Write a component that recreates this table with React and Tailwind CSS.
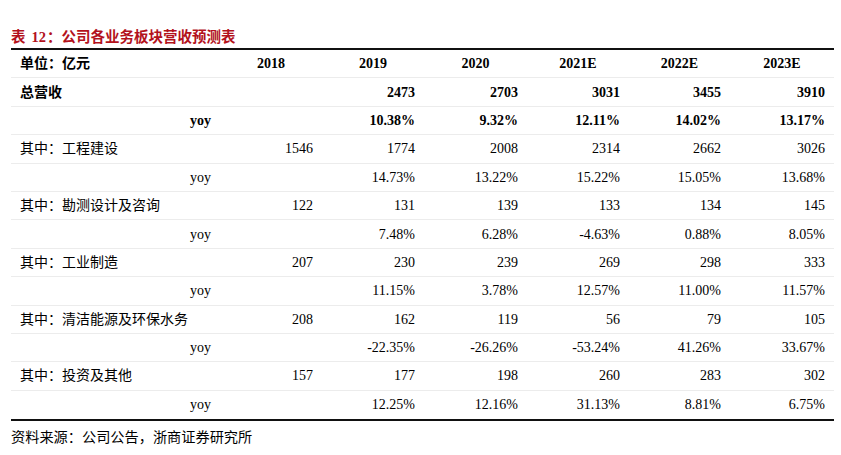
import React from "react";

const rows = [
  { label: "总营收", v: ["", "2473", "2703", "3031", "3455", "3910"], bold: true },
  { yoy: true, v: ["", "10.38%", "9.32%", "12.11%", "14.02%", "13.17%"], bold: true },
  { label: "其中：工程建设", v: ["1546", "1774", "2008", "2314", "2662", "3026"] },
  { yoy: true, v: ["", "14.73%", "13.22%", "15.22%", "15.05%", "13.68%"] },
  { label: "其中：勘测设计及咨询", v: ["122", "131", "139", "133", "134", "145"] },
  { yoy: true, v: ["", "7.48%", "6.28%", "-4.63%", "0.88%", "8.05%"] },
  { label: "其中：工业制造", v: ["207", "230", "239", "269", "298", "333"] },
  { yoy: true, v: ["", "11.15%", "3.78%", "12.57%", "11.00%", "11.57%"] },
  { label: "其中：清洁能源及环保水务", v: ["208", "162", "119", "56", "79", "105"] },
  { yoy: true, v: ["", "-22.35%", "-26.26%", "-53.24%", "41.26%", "33.67%"] },
  { label: "其中：投资及其他", v: ["157", "177", "198", "260", "283", "302"] },
  { yoy: true, v: ["", "12.25%", "12.16%", "31.13%", "8.81%", "6.75%"] },
];

const years = ["2018", "2019", "2020", "2021E", "2022E", "2023E"];

const grid = "grid grid-cols-[209px_102px_102px_103px_102px_101px_104px] items-center";

export default function App() {
  return (
    <div
      className="w-[841px] h-[455px] bg-white text-black pl-[11px]"
      style={{ fontFamily: '"Liberation Serif", "Noto Sans CJK SC", serif' }}
    >
      <div className="pt-[26px] h-[48px] text-[14.5px] leading-[20px] font-bold text-[#b3121c] flex items-center">
        <span>表</span>
        <span className="ml-[6px]">12</span>
        <span className="ml-[1px]">：</span>
        <span>公司各业务板块营收预测表</span>
      </div>
      <div className="w-[823px] border-t-2 border-b-2 border-[#111]">
        <div className={`${grid} h-[28.4px] border-b border-[#ececec] text-[14px] font-bold`}>
          <div className="pl-[9px]">单位：亿元</div>
          {years.map((y) => (
            <div key={y} className="text-center">{y}</div>
          ))}
        </div>
        {rows.map((r, i) => (
          <div
            key={i}
            className={`${grid} h-[28.4px] text-[14px] ${i < rows.length - 1 ? "border-b border-[#ececec]" : ""} ${r.bold ? "font-bold" : ""}`}
          >
            {r.yoy ? (
              <div className="text-right pr-[9px]">yoy</div>
            ) : (
              <div className="pl-[9px]">{r.label}</div>
            )}
            {r.v.map((x, j) => (
              <div key={j} className="text-right pr-[9px]">{x}</div>
            ))}
          </div>
        ))}
      </div>
      <div className="mt-[6px] text-[14.2px] leading-[20px]">资料来源：公司公告，浙商证券研究所</div>
    </div>
  );
}
